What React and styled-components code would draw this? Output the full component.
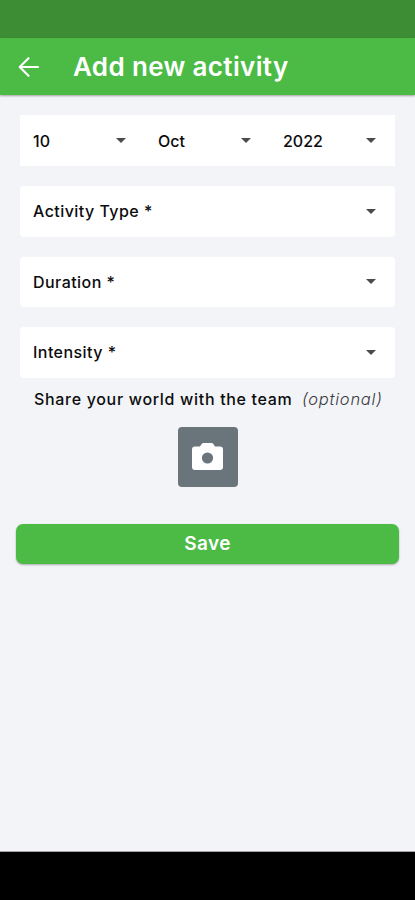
import React from "react";
import styled, { createGlobalStyle } from "styled-components";

const dateFields = ["10", "Oct", "2022"];
const fields = ["Activity Type *", "Duration *", "Intensity *"];

const Caret = () => (
  <CaretIcon viewBox="0 0 10 5" aria-hidden="true">
    <path d="M0 0h10L5 5z" fill="currentColor" />
  </CaretIcon>
);

const App = () => {
  return (
    <Screen>
      <GlobalStyle />
      <StatusBar />
      <Header>
        <BackButton aria-label="Back">
          <svg width="30" height="30" viewBox="0 0 30 30">
            <path
              d="M24 15H6M14.500 6.200 5.700 15l8.800 8.800"
              fill="none"
              stroke="currentColor"
              strokeWidth="2.2"
              strokeLinecap="round"
              strokeLinejoin="round"
            />
          </svg>
        </BackButton>
        <Title>Add new activity</Title>
      </Header>
      <Form>
        <DateRow>
          {dateFields.map((item) => (
            <DateSelect key={item}>
              <Label $spacing="0px">{item}</Label>
              <Caret />
            </DateSelect>
          ))}
        </DateRow>
        {fields.map((item) => (
          <Select key={item}>
            <Label>{item}</Label>
            <Caret />
          </Select>
        ))}
      </Form>
      <ShareRow>
        <ShareText>Share your world with the team</ShareText>
        <Optional>(optional)</Optional>
      </ShareRow>
      <CameraButton aria-label="Add photo">
        <svg width="31" height="27" viewBox="0 0 31 27">
          <path
            d="M3 3.500H8l1.500-2.300Q10.300 0 11.500 0h8q1.200 0 2 1.200L23 3.500h5Q31 3.500 31 6.500V24q0 3-3 3H3q-3 0-3-3V6.500Q0 3.500 3 3.500z"
            fill="#fff"
          />
          <circle cx="15.500" cy="15" r="5.600" fill="#69747b" />
        </svg>
      </CameraButton>
      <SaveButton>Save</SaveButton>
      <NavBar />
    </Screen>
  );
};

export default App;

const GlobalStyle = createGlobalStyle`
  * {
    box-sizing: border-box;
  }
  body {
    margin: 0;
    font-family: Inter, "Noto Sans", sans-serif;
  }
  button {
    border: 0;
    padding: 0;
    font-family: inherit;
  }
`;

const Screen = styled.main`
  display: flex;
  flex-direction: column;
  height: 900px;
  background: #f2f4f8;
  color: #0c0c0d;
`;

const StatusBar = styled.div`
  height: 38px;
  flex-shrink: 0;
  background: #3c8d34;
`;

const Header = styled.header`
  display: flex;
  align-items: center;
  height: 57px;
  flex-shrink: 0;
  padding-left: 14px;
  background: #4bbb45;
  color: #fff;
  box-shadow: 0 1px 2px rgba(0, 0, 0, 0.35);
`;

const BackButton = styled.button`
  display: flex;
  background: none;
  color: inherit;
`;

const Title = styled.h1`
  margin: 0 0 0 29px;
  font-size: 26px;
  font-weight: 600;
  line-height: 32px;
  letter-spacing: 0.35px;
`;

const Form = styled.section`
  display: flex;
  flex-direction: column;
  gap: 20px;
  padding: 20px 20px 0;
`;

const DateRow = styled.div`
  display: flex;
  height: 51px;
  background: #fff;
`;

const DateSelect = styled.div`
  display: flex;
  flex: 1;
  align-items: center;
  justify-content: space-between;
  padding: 0 19px 0 13px;
`;

const Select = styled.div`
  display: flex;
  align-items: center;
  justify-content: space-between;
  height: 50.5px;
  padding: 0 19px 0 13px;
  border-radius: 4px;
  background: #fff;
`;

const Label = styled.span`
  font-size: 16px;
  font-weight: 500;
  letter-spacing: ${({ $spacing }) => $spacing || "0.45px"};
`;

const CaretIcon = styled.svg`
  width: 10px;
  height: 5px;
  color: #4b4b4d;
`;

const ShareRow = styled.div`
  display: flex;
  align-items: center;
  height: 24px;
  margin-top: 9.5px;
  padding-left: 34px;
  white-space: nowrap;
`;

const ShareText = styled.span`
  width: 268px;
  font-size: 16px;
  font-weight: 500;
  letter-spacing: 0.68px;
`;

const Optional = styled.span`
  font-size: 16.5px;
  font-style: italic;
  font-weight: 300;
  color: #3b3b3f;
  letter-spacing: 0.75px;
`;

const CameraButton = styled.button`
  display: flex;
  align-items: center;
  justify-content: center;
  align-self: center;
  width: 60px;
  height: 60px;
  flex-shrink: 0;
  margin-top: 15.5px;
  border-radius: 4px;
  background: #69747b;
`;

const SaveButton = styled.button`
  height: 40px;
  flex-shrink: 0;
  margin: 37px 16px 0;
  border-radius: 7px;
  background: #4bbb45;
  color: #fff;
  font-size: 19px;
  font-weight: 600;
  letter-spacing: 0.4px;
  box-shadow: 0 1px 2px rgba(0, 0, 0, 0.3);
`;

const NavBar = styled.div`
  height: 49px;
  flex-shrink: 0;
  margin-top: auto;
  border-top: 1px solid #a5a5a5;
  background: #000;
`;
